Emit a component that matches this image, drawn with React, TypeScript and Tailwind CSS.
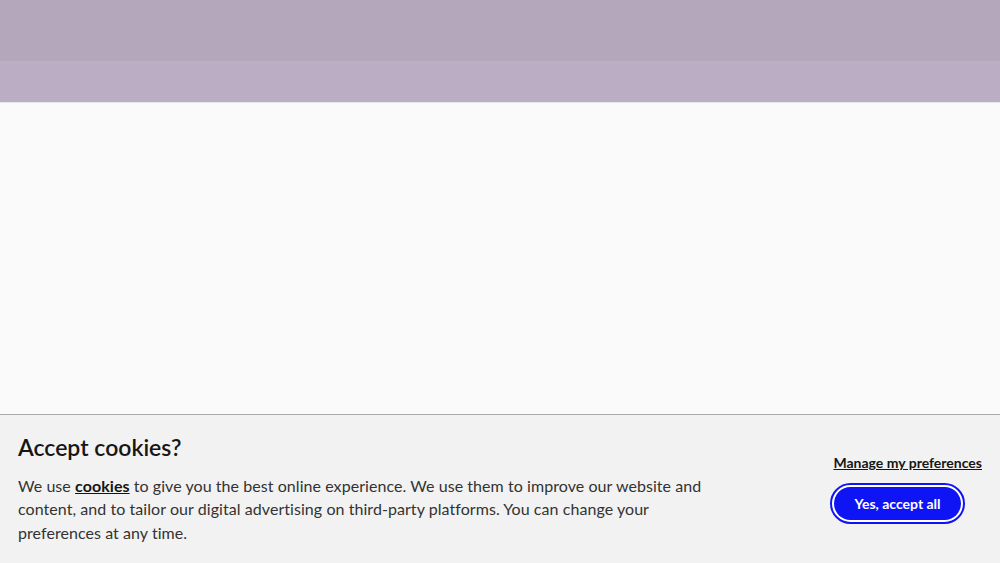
import React from "react";

const font = { fontFamily: "Lato, 'Open Sans', sans-serif" };

function CookieBanner() {
  return (
    <div
      className="fixed bottom-0 left-0 right-0 h-[149px] border-t border-[#a9a9a9] bg-[#f2f2f2] flex justify-between pl-[18px] pr-[18px] text-[#1e1e1e]"
      style={font}
    >
      {/* message */}
      <div className="pt-[18px] w-[710px]">
        <h2 className="text-[23px] leading-[28px] font-semibold text-[#161616]">
          Accept cookies?
        </h2>
        <p className="mt-[13px] text-[16px] leading-[23.3px] tracking-[0.06px] text-[#333]">
          We use{" "}
          <a href="#" className="font-bold underline text-[#161616]">
            cookies
          </a>{" "}
          to give you the best online experience. We use them to improve our website and
          content, and to tailor our digital advertising on third-party platforms. You can
          change your preferences at any time.
        </p>
      </div>

      {/* actions */}
      <div className="flex flex-col items-end pt-[39px]">
        <a
          href="#"
          className="text-[14px] leading-[18px] font-bold underline text-[#161616]"
        >
          Manage my preferences
        </a>
        <button className="mt-[11px] mr-[17px] h-[41px] w-[135px] rounded-full border-2 border-[#0f14f5] bg-white p-[2px]">
          <span className="flex h-full w-full items-center justify-center rounded-full bg-[#0f14f5] text-white text-[14px] font-bold">
            Yes, accept all
          </span>
        </button>
      </div>
    </div>
  );
}

export default function App() {
  return (
    <div className="min-h-[563px] bg-[#fafafa] flex flex-col">
      {/* HEADER BANDS */}
      <div className="h-[61px] bg-[#b4a7bb]" />
      <div className="h-[42px] bg-[#bbaec4] border-b border-[#e9e6ea]" />

      {/* PAGE BODY */}
      <main className="flex-1 bg-[#fafafa]" />

      <CookieBanner />
    </div>
  );
}
